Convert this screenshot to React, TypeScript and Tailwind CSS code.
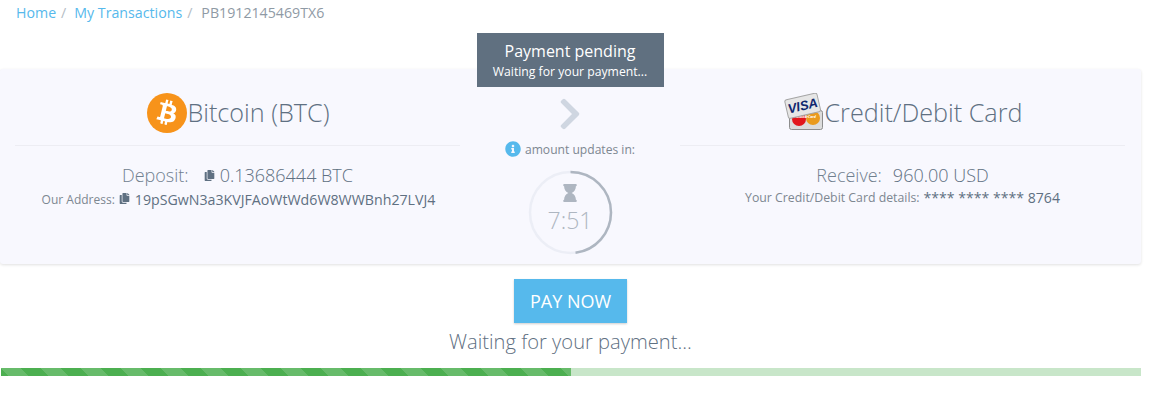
import { FaBtc, FaChevronRight, FaCopy, FaHourglass, FaInfoCircle } from 'react-icons/fa'

// Little visa + mastercard image from the original, redrawn
function CardsIcon() {
  return (
    <svg width="40" height="38" viewBox="0 0 40 38" className="shrink-0 -mt-[2px]">
      <rect x="5.5" y="17.5" width="33" height="19" rx="2" fill="#dcdcdc" stroke="#8d8d8d" />
      <circle cx="15" cy="26" r="7" fill="#e2161c" />
      <circle cx="29" cy="25" r="7" fill="#ea9a1c" />
      <text x="22" y="25" fontSize="3.6" fill="#fff" textAnchor="middle" fontStyle="italic" fontWeight="700">MasterCard</text>
      <g transform="rotate(-13 20 14)">
        <rect x="2.5" y="3" width="33" height="19" rx="2" fill="#e6e6e6" stroke="#a5a5a5" />
        <text x="19" y="17" fontSize="13" fill="#10286f" textAnchor="middle" fontStyle="italic" fontWeight="800" fontFamily="'Liberation Sans', sans-serif">VISA</text>
      </g>
    </svg>
  )
}

export default function App() {
  return (
    <div className="w-[1164px] h-[402px] bg-white font-['Open_Sans',sans-serif] overflow-hidden">
      {/* Breadcrumb */}
      <div className="h-[26px] pl-4 flex items-center text-[14.2px] text-[#8f9aa5]">
        <span className="text-[#56b9ec]">Home</span>
        <span className="ml-[5px] mr-[8px] text-[#b4bcc4]">/</span>
        <span className="text-[#56b9ec]">My Transactions</span>
        <span className="ml-[5px] mr-[9px] text-[#b4bcc4]">/</span>
        <span>PB1912145469TX6</span>
      </div>

      {/* Exchange panel */}
      <div className="mt-[43px] w-[1141px] h-[195px] bg-[#f8f8fe] rounded-[3px] shadow-[0_1px_3px_rgba(0,0,0,0.12)] flex">
        <div className="w-[460px] pl-[15px]">
          <div className="h-[77px] border-b border-[#ededf3] flex items-center justify-center pt-[11px] pl-[2px]">
            <div className="w-10 h-10 rounded-full bg-[#f7931a] flex items-center justify-center text-white">
              <FaBtc size={25} className="rotate-[14deg]" />
            </div>
            <span className="text-[25.2px] font-light text-[#5f7082]">Bitcoin (BTC)</span>
          </div>
          <div className="pt-[17px] text-center">
            <div className="flex items-center justify-center text-lg leading-[25px] font-light text-[#5f7082]">
              <span className="mr-[15px] text-[#71808f]">Deposit:</span>
              <FaCopy size={11} className="mr-[5px] text-[#5f7082]" />
              <span>0.13686444 BTC</span>
            </div>
            <div className="flex items-center justify-center text-[14.2px] leading-[23px] text-[#5f7082] pl-[2px]">
              <span className="mr-1 text-xs text-[#7d8791]">Our Address:</span>
              <FaCopy size={11} className="mr-[5px] mb-[3px]" />
              <span>19pSGwN3a3KVJFAoWtWd6W8WWBnh27LVJ4</span>
            </div>
          </div>
        </div>

        <div className="w-[220px] flex flex-col items-center -mt-9">
          <div className="w-[187px] h-[54px] bg-[#607080] text-white text-center flex flex-col justify-center">
            <div className="text-base leading-[23px]">Payment pending</div>
            <div className="text-[12.2px] leading-[17px]">Waiting for your payment...</div>
          </div>
          <FaChevronRight size={36} className="mt-[9px] text-[#cfd6e1]" />
          <div className="mt-2 flex items-center text-[12.1px] leading-4 text-[#7d8791]">
            <FaInfoCircle size={16} className="mr-1 text-[#56b9ec]" />
            <span className="mt-[2px]">amount updates in:</span>
          </div>
          <div className="relative mt-[12px] w-[85px] h-[85px] flex flex-col items-center text-[#aeb6c1]">
            <svg width="85" height="85" viewBox="0 0 85 85" className="absolute inset-0">
              <circle cx="42.5" cy="42.5" r="40.5" fill="none" stroke="#eceef6" strokeWidth="2.5" />
              <circle
                cx="42.5"
                cy="42.5"
                r="40.5"
                fill="none"
                stroke="#aeb6c1"
                strokeWidth="2.5"
                pathLength="100"
                strokeDasharray="48 100"
                transform="rotate(-90 42.5 42.5)"
              />
            </svg>
            <FaHourglass size={18} className="mt-[14px]" />
            <span className="text-[23px] leading-[30px] font-light mt-[3px]">7:51</span>
          </div>
        </div>

        <div className="w-[445px]">
          <div className="h-[77px] border-b border-[#ededf3] flex items-center justify-center pt-[11px] pl-[2px]">
            <CardsIcon />
            <span className="text-[25.2px] font-light text-[#5f7082]">Credit/Debit Card</span>
          </div>
          <div className="pt-[17px] text-center">
            <div className="text-lg leading-[25px] font-light text-[#71808f]">
              <span className="mr-[11px]">Receive:</span>
              <span className="text-[#5f7082]">960.00 USD</span>
            </div>
            <div className="flex items-center justify-center text-[14.1px] leading-[19px] text-[#5f7082]">
              <span className="mr-1 text-[12.3px] text-[#7d8791]">Your Credit/Debit Card details:</span>
              <span>**** **** **** 8764</span>
            </div>
          </div>
        </div>
      </div>

      {/* Pay button and status */}
      <div className="w-[1141px] flex flex-col items-center">
        <button className="mt-[15px] w-[113px] h-[44px] bg-[#56b9ec] text-white text-lg shadow-[0_1px_2px_rgba(0,0,0,0.2)]">
          PAY NOW
        </button>
        <div className="mt-[4px] text-[20.15px] leading-[28px] font-light text-[#5f7082]">Waiting for your payment...</div>
      </div>

      {/* Progress bar */}
      <div className="mt-[13px] ml-[1px] w-[1140px] h-2 bg-[#c8e6c9]">
        <div className="w-1/2 h-full bg-[#4caf50] bg-[length:40px_40px] bg-[linear-gradient(45deg,rgba(255,255,255,0.15)_25%,transparent_25%,transparent_50%,rgba(255,255,255,0.15)_50%,rgba(255,255,255,0.15)_75%,transparent_75%,transparent)]" />
      </div>
    </div>
  )
}
